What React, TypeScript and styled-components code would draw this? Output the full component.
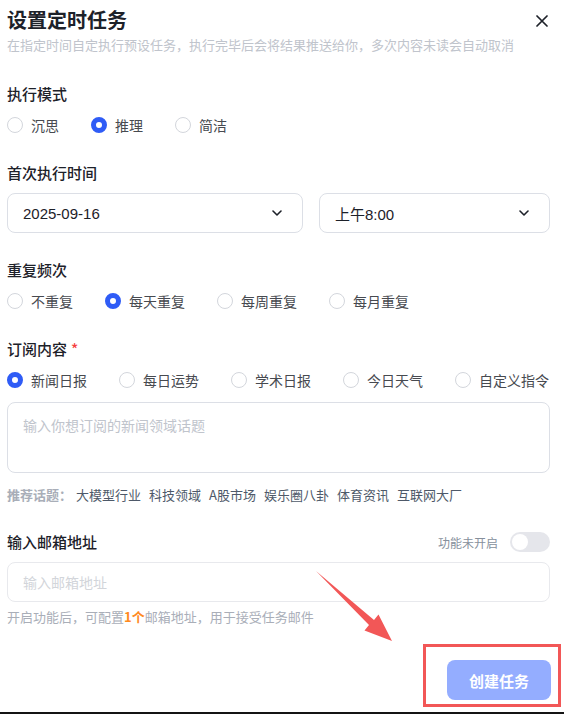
import React from "react"
import styled, { createGlobalStyle } from "styled-components"

const GlobalStyle = createGlobalStyle`
  html, body {
    margin: 0;
    padding: 0;
    background: #ffffff;
  }
  * {
    box-sizing: border-box;
  }
`

const Page = styled.div`
  position: relative;
  width: 564px;
  height: 714px;
  padding: 6px 14px 0 7px;
  font-family: "Noto Sans CJK SC", "Liberation Sans", sans-serif;
  color: #1d2129;
  border-bottom: 2px solid #141414;
  overflow: hidden;
`

const Header = styled.div`
  position: relative;
  display: flex;
  flex-direction: column;
`

const Title = styled.div`
  font-size: 20px;
  line-height: 28px;
  font-weight: 700;
  color: #1d2129;
`

const Subtitle = styled.div`
  margin-top: 1px;
  font-size: 13px;
  line-height: 20px;
  color: #c0c4cc;
  white-space: nowrap;
`

const CloseBtn = styled.button`
  position: absolute;
  top: 7px;
  right: 0;
  width: 16px;
  height: 16px;
  padding: 0;
  border: none;
  background: none;
  display: flex;
  align-items: center;
  justify-content: center;
`

const Section = styled.div<{ $gap?: number }>`
  margin-top: ${(p) => p.$gap ?? 28}px;
  display: flex;
  flex-direction: column;
`

const LabelRow = styled.div`
  display: flex;
  align-items: center;
  justify-content: space-between;
  height: 22px;
`

const Label = styled.div`
  font-size: 15px;
  line-height: 22px;
  font-weight: 500;
  color: #1d2129;
`

const Star = styled.span`
  color: #f53f3f;
  margin-left: 4px;
`

const RadioGroup = styled.div`
  margin-top: 9px;
  display: flex;
  align-items: center;
  gap: 32px;
  height: 22px;
`

const RadioItem = styled.label`
  display: flex;
  align-items: center;
  gap: 8px;
  font-size: 14px;
  line-height: 22px;
  color: #474a50;
  white-space: nowrap;
`

const RadioDot = styled.span<{ $checked?: boolean }>`
  width: 16px;
  height: 16px;
  border-radius: 50%;
  flex: none;
  background: #ffffff;
  border: ${(p) => (p.$checked ? "5px solid #2f5cf6" : "1px solid #d3d6dc")};
`

const SelectRow = styled.div`
  margin-top: 9px;
  display: flex;
  gap: 16px;
`

const Select = styled.div<{ $width?: number }>`
  height: 40px;
  flex: ${(p) => (p.$width ? `0 0 ${p.$width}px` : "1")};
  border: 1px solid #dcdfe6;
  border-radius: 8px;
  display: flex;
  align-items: center;
  justify-content: space-between;
  padding: 0 20px 0 15px;
  font-family: "Liberation Sans", "Noto Sans CJK SC", sans-serif;
  font-size: 15px;
  color: #1d2129;
`

const TextArea = styled.div`
  margin-top: 11px;
  height: 71px;
  border: 1px solid #dcdfe6;
  border-radius: 8px;
  padding: 12px 15px;
  font-size: 14px;
  line-height: 20px;
  color: #c0c4cc;
`

const Topics = styled.div`
  margin-top: 12px;
  display: flex;
  align-items: center;
  gap: 8px;
  font-size: 13px;
  line-height: 20px;
  color: #4e5969;
`

const TopicsLabel = styled.span`
  font-weight: 600;
  color: #a9aeb8;
  margin-right: -4px;
`

const Topic = styled.span`
  white-space: nowrap;
`

const SwitchWrap = styled.div`
  display: flex;
  align-items: center;
  gap: 12px;
  font-size: 12px;
  color: #86909c;
`

const Switch = styled.span`
  position: relative;
  width: 40px;
  height: 20px;
  border-radius: 10px;
  background: #e5e6eb;
  &::after {
    content: "";
    position: absolute;
    top: 2px;
    left: 2px;
    width: 16px;
    height: 16px;
    border-radius: 50%;
    background: #ffffff;
  }
`

const Input = styled.div`
  margin-top: 9px;
  height: 40px;
  border: 1px solid #e8e9ed;
  border-radius: 8px;
  display: flex;
  align-items: center;
  padding: 0 15px;
  font-size: 14px;
  color: #d2d5da;
`

const Helper = styled.div`
  margin-top: 5px;
  font-size: 13px;
  line-height: 20px;
  color: #a9aeb8;
`

const Highlight = styled.span`
  color: #ff8a1f;
  font-weight: 600;
`

const Footer = styled.div`
  margin-top: 33px;
  display: flex;
  justify-content: flex-end;
  margin-right: -1px;
`

const SubmitBtn = styled.button`
  width: 104px;
  height: 40px;
  border: none;
  border-radius: 8px;
  background: #94adff;
  color: #ffffff;
  font-family: "Noto Sans CJK SC", sans-serif;
  font-size: 15px;
  font-weight: 700;
`

const Callout = styled.div`
  position: absolute;
  left: 423px;
  top: 644px;
  width: 138px;
  height: 63px;
  border: 3px solid #f25757;
  pointer-events: none;
`

const ArrowLayer = styled.svg`
  position: absolute;
  left: 0;
  top: 0;
  pointer-events: none;
`

const Chevron = () => (
  <svg width="10" height="6" viewBox="0 0 10 6" fill="none">
    <path d="M1 1l4 4 4-4" stroke="#1d2129" strokeWidth="1.6" strokeLinecap="round" strokeLinejoin="round" />
  </svg>
)

const modes = ["沉思", "推理", "简洁"]
const repeats = ["不重复", "每天重复", "每周重复", "每月重复"]
const contents = ["新闻日报", "每日运势", "学术日报", "今日天气", "自定义指令"]
const topics = ["大模型行业", "科技领域", "A股市场", "娱乐圈八卦", "体育资讯", "互联网大厂"]

const App = function () {
  return (
    <>
      <GlobalStyle />
      <Page>
        <Header>
          <Title>设置定时任务</Title>
          <Subtitle>在指定时间自定执行预设任务，执行完毕后会将结果推送给你，多次内容未读会自动取消</Subtitle>
          <CloseBtn>
            <svg width="12" height="12" viewBox="0 0 12 12">
              <path d="M1 1l10 10M11 1L1 11" stroke="#1d2129" strokeWidth="1.7" strokeLinecap="round" />
            </svg>
          </CloseBtn>
        </Header>

        <Section>
          <Label>执行模式</Label>
          <RadioGroup>
            {modes.map((m) => (
              <RadioItem key={m}>
                <RadioDot $checked={m === "推理"} />
                {m}
              </RadioItem>
            ))}
          </RadioGroup>
        </Section>

        <Section $gap={26}>
          <Label>首次执行时间</Label>
          <SelectRow>
            <Select $width={296}>
              2025-09-16
              <Chevron />
            </Select>
            <Select>
              上午8:00
              <Chevron />
            </Select>
          </SelectRow>
        </Section>

        <Section $gap={26}>
          <Label>重复频次</Label>
          <RadioGroup>
            {repeats.map((r) => (
              <RadioItem key={r}>
                <RadioDot $checked={r === "每天重复"} />
                {r}
              </RadioItem>
            ))}
          </RadioGroup>
        </Section>

        <Section $gap={26}>
          <Label>
            订阅内容<Star>*</Star>
          </Label>
          <RadioGroup>
            {contents.map((c) => (
              <RadioItem key={c}>
                <RadioDot $checked={c === "新闻日报"} />
                {c}
              </RadioItem>
            ))}
          </RadioGroup>
          <TextArea>输入你想订阅的新闻领域话题</TextArea>
          <Topics>
            <TopicsLabel>推荐话题：</TopicsLabel>
            {topics.map((t) => (
              <Topic key={t}>{t}</Topic>
            ))}
          </Topics>
        </Section>

        <Section $gap={26}>
          <LabelRow>
            <Label>输入邮箱地址</Label>
            <SwitchWrap>
              功能未开启
              <Switch />
            </SwitchWrap>
          </LabelRow>
          <Input>输入邮箱地址</Input>
          <Helper>
            开启功能后，可配置<Highlight>1个</Highlight>邮箱地址，用于接受任务邮件
          </Helper>
        </Section>

        <Footer>
          <SubmitBtn>创建任务</SubmitBtn>
        </Footer>

        <Callout />
        <ArrowLayer width="564" height="714" viewBox="0 0 564 714">
          <polygon
            points="316,571 374,620 378.5,614.5 392,641 364.5,630.5 369,625"
            fill="#f25757"
          />
        </ArrowLayer>
      </Page>
    </>
  )
}

export default App
